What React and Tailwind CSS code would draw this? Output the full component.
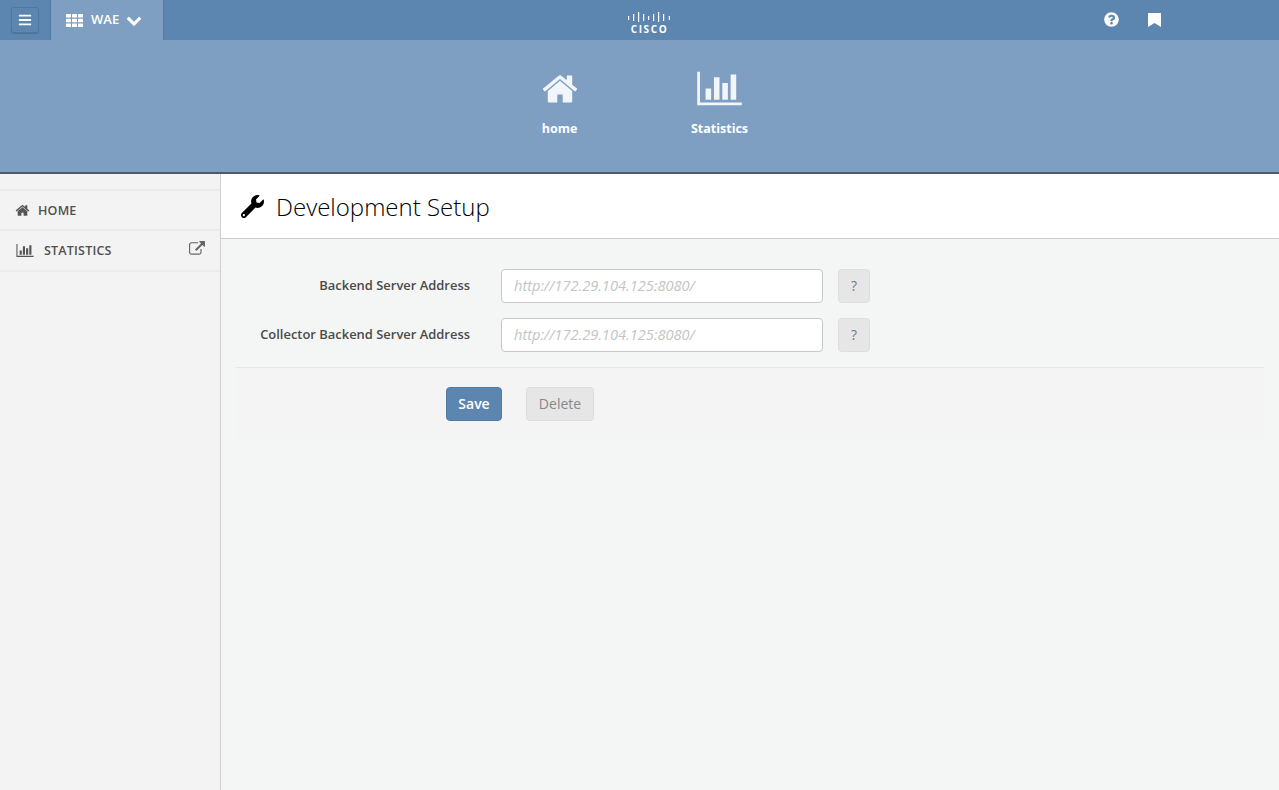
import { FaBars, FaQuestionCircle, FaWrench } from 'react-icons/fa';

// font-awesome 4 glyphs, react-icons only ships the 5 versions
const HomeIcon = ({ className }) => (
    <svg viewBox="0 0 1792 1792" fill="currentColor" className={className}>
        <path d="M1472 992v480q0 26-19 45t-45 19h-384v-384h-256v384h-384q-26 0-45-19t-19-45v-480q0-1 .5-3t.5-3l575-474 575 474q1 2 1 6zm223-69l-62 74q-8 9-21 11h-3q-13 0-21-7l-692-577-692 577q-12 8-24 7-13-2-21-11l-62-74q-8-10-7-23.500t11-21.500l719-599q32-26 76-26t76 26l244 204v-195q0-14 9-23t23-9h192q14 0 23 9t9 23v408l219 182q10 8 11 21.500t-7 23.500z" />
    </svg>
);

const ChartIcon = ({ className }) => (
    <svg viewBox="0 0 2048 1792" fill="currentColor" className={className}>
        <path d="M640 896v512h-256v-512h256zm384-512v1024h-256v-1024h256zm1024 1152v128h-2048v-1536h128v1408h1920zm-640-896v768h-256v-768h256zm384-384v1152h-256v-1152h256z" />
    </svg>
);

const ExternalIcon = ({ className }) => (
    <svg viewBox="0 0 1792 1792" fill="currentColor" className={className}>
        <path d="M1408 928v320q0 119-84.500 203.500t-203.500 84.500h-832q-119 0-203.500-84.500t-84.500-203.500v-832q0-119 84.500-203.500t203.500-84.500h704q14 0 23 9t9 23v64q0 14-9 23t-23 9h-704q-66 0-113 47t-47 113v832q0 66 47 113t113 47h832q66 0 113-47t47-113v-320q0-14 9-23t23-9h64q14 0 23 9t9 23zm384-864v512q0 26-19 45t-45 19-45-19l-176-176-652 652q-10 10-23 10t-23-10l-114-114q-10-10-10-23t10-23l652-652-176-176q-19-19-19-45t19-45 45-19h512q26 0 45 19t19 45z" />
    </svg>
);

const ChevronIcon = ({ className }) => (
    <svg viewBox="0 0 1792 1792" fill="currentColor" className={className}>
        <path d="M1683 808l-742 741q-19 19-45 19t-45-19l-742-741q-19-19-19-45.500t19-45.500l166-165q19-19 45-19t45 19l531 531 531-531q19-19 45-19t45 19l166 165q19 19 19 45.500t-19 45.500z" />
    </svg>
);

const GridIcon = () => (
    <svg width="17" height="13" viewBox="0 0 17 13" fill="white">
        {[0, 6, 12].map((x) =>
            [0, 4.7, 9.4].map((y) => <rect key={`${x}-${y}`} x={x} y={y} width="5" height="3.6" rx="0.5" />)
        )}
    </svg>
);

const BookmarkIcon = () => (
    <svg width="13" height="14" viewBox="0 0 13 14" fill="white">
        <path d="M0 0h13v14l-6.500-4-6.500 4z" />
    </svg>
);

const CiscoLogo = () => (
    <div className="flex w-[44px] flex-col items-center">
        <svg width="42" height="11" viewBox="0 0 42 11" fill="white">
            <rect x="0" y="5" width="1.2" height="4" />
            <rect x="5" y="3" width="1.2" height="7" />
            <rect x="10" y="1" width="1.2" height="10" />
            <rect x="15" y="3" width="1.2" height="7" />
            <rect x="20" y="5" width="1.2" height="4" />
            <rect x="25" y="3" width="1.2" height="7" />
            <rect x="30" y="1" width="1.2" height="10" />
            <rect x="35" y="3" width="1.2" height="7" />
            <rect x="40.800" y="5" width="1.2" height="4" />
        </svg>
        <span className="mt-[2px] ml-[2px] text-[10px] leading-[10px] font-bold tracking-[1.6px] text-white">CISCO</span>
    </div>
);

function FormRow({ label }) {
    return (
        <div className="flex items-center">
            <label className="w-[250px] pr-[16px] text-right text-[12.95px] font-semibold text-[#4a4a4a]">{label}</label>
            <input
                readOnly
                placeholder="http://172.29.104.125:8080/"
                className="ml-[15px] h-[34px] w-[322px] rounded-[4px] border border-[#c8c8c8] bg-white px-[12px] pb-[2px] text-[14.6px] italic placeholder:text-[#c4c4c4]"
            />
            <button className="ml-[15px] h-[34px] w-[32px] rounded-[4px] border border-[#dedede] bg-[#e6e6e6] pb-[2px] text-[14px] text-[#777]">?</button>
        </div>
    );
}

export default function App() {
    return (
        <div className="flex h-[790px] flex-col overflow-hidden bg-[#f4f6f5] font-['Open_Sans',sans-serif]">
            <header className="flex h-[40px] shrink-0 items-stretch bg-[#5c86af] text-white">
                <div className="flex w-[51px] items-center border-r border-[#527ba3] pl-[11px]">
                    <button className="flex h-[26px] w-[28px] items-center justify-center rounded-[3px] border border-[#50779d] bg-[#5c86af] shadow-[0_1px_1px_rgba(0,0,0,0.15)]">
                        <FaBars className="text-[14px]" />
                    </button>
                </div>
                <div className="flex w-[113px] items-center border-r border-[#527ba3] bg-[#7e9fc2] pl-[15px]">
                    <GridIcon />
                    <span className="ml-[8px] text-[13px] font-semibold">WAE</span>
                    <ChevronIcon className="ml-[7px] h-[16px] w-[16px]" />
                </div>
                <div className="flex flex-1 justify-center pt-[11px] pl-[29px]">
                    <CiscoLogo />
                </div>
                <div className="flex items-center pr-[118px] pb-[1px]">
                    <FaQuestionCircle className="text-[15px]" />
                    <div className="ml-[29px]">
                        <BookmarkIcon />
                    </div>
                </div>
            </header>

            <nav className="flex h-[132px] shrink-0 justify-center bg-[#7e9fc2] pt-[32px] text-white">
                <div className="flex w-[160px] flex-col items-center">
                    <HomeIcon className="mt-[-2px] h-[38px] w-[38px] text-[#f2f5f9]" />
                    <span className="mt-[12px] text-[12.5px] leading-[17px] font-bold">home</span>
                </div>
                <div className="flex w-[160px] flex-col items-center">
                    <ChartIcon className="mt-[-3px] h-[39px] w-[45px] text-[#f2f5f9]" />
                    <span className="mt-[12px] text-[12.5px] leading-[17px] font-bold">Statistics</span>
                </div>
            </nav>

            <div className="flex min-h-0 flex-1 border-t-2 border-[#4f5a64]">
                <aside className="w-[221px] shrink-0 border-r border-[#cdd0d0] bg-[#f3f3f3] pt-[15px] text-[#505050]">
                    <div className="flex h-[42px] items-center border-y-2 border-[#ebebeb] pl-[15px]">
                        <HomeIcon className="h-[15px] w-[15px] text-[#555]" />
                        <span className="mt-[2px] ml-[8px] text-[12.5px] font-semibold tracking-[0.2px]">HOME</span>
                    </div>
                    <div className="flex h-[41px] items-center border-b-2 border-[#ebebeb] pr-[15px] pl-[16px]">
                        <ChartIcon className="h-[15px] w-[18px] text-[#555]" />
                        <span className="mt-[2px] ml-[10px] text-[12.5px] font-semibold tracking-[0.2px]">STATISTICS</span>
                        <ExternalIcon className="mt-[-3px] ml-auto h-[16px] w-[16px] text-[#666]" />
                    </div>
                </aside>

                <main className="min-w-0 flex-1">
                    <div className="flex h-[65px] items-center border-b border-[#cdd0d0] bg-white pl-[20px]">
                        <FaWrench className="text-[23px] text-black" />
                        <h1 className="mt-[2px] ml-[12px] text-[24px] font-light text-black">Development Setup</h1>
                    </div>
                    <div className="px-[15px] pt-[30px]">
                        <div className="flex flex-col gap-[15px]">
                            <FormRow label="Backend Server Address" />
                            <FormRow label="Collector Backend Server Address" />
                        </div>
                        <div className="mt-[15px] flex h-[73px] gap-[24px] border-t border-[#e6e6e6] bg-[#f4f4f4] pt-[19px] pl-[210px]">
                            <button className="h-[34px] w-[56px] rounded-[4px] border border-[#527ba3] bg-[#5c86af] pb-[2px] text-[14px] font-semibold text-white">Save</button>
                            <button className="h-[34px] w-[68px] rounded-[4px] border border-[#dcdcdc] bg-[#e6e6e6] pb-[2px] text-[14px] text-[#888]">Delete</button>
                        </div>
                    </div>
                </main>
            </div>
        </div>
    );
}
